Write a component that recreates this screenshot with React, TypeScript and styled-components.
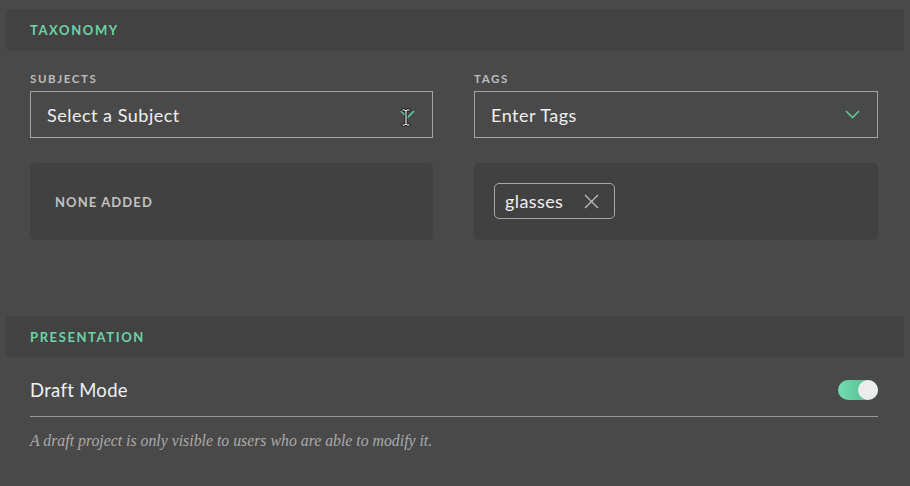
import React from "react";
import styled, { createGlobalStyle } from "styled-components";

const Global = createGlobalStyle`
  html, body { margin: 0; padding: 0; background: #494949; }
  body { font-family: "Lato", "Noto Sans", sans-serif; -webkit-font-smoothing: antialiased; }
`;

const Page = styled.div`
  width: 910px;
  height: 486px;
  background: #494949;
  padding-top: 9px;
  box-sizing: border-box;
  overflow: hidden;
`;

const SectionHeader = styled.div<{ $mt?: number }>`
  margin: ${(p) => p.$mt ?? 0}px 6px 0 6px;
  height: 42px;
  background: #424242;
  border-radius: 4px;
  display: flex;
  align-items: center;
  padding-left: 24px;
  color: #6dd3a6;
  font-size: 13px;
  font-weight: 700;
  letter-spacing: 1.6px;
`;

const Content = styled.div`
  padding: 0 32px 0 30px;
`;

const Grid = styled.div`
  display: grid;
  grid-template-columns: 403px 404px;
  column-gap: 41px;
  margin-top: 21px;
`;

const Column = styled.div`
  display: flex;
  flex-direction: column;
`;

const Label = styled.div`
  font-size: 11.5px;
  font-weight: 700;
  letter-spacing: 1.6px;
  color: #bdbdbd;
  height: 14px;
  line-height: 14px;
  margin-bottom: 5px;
`;

const SelectBox = styled.div`
  position: relative;
  height: 47px;
  box-sizing: border-box;
  border: 1px solid #a3a3a3;
  display: flex;
  align-items: center;
  justify-content: space-between;
  padding: 0 17px 0 16px;
  font-size: 18px;
  letter-spacing: 0.5px;
  color: #efefef;
`;

const Chevron = styled.svg`
  width: 15px;
  height: 9px;
`;

const Cursor = styled.svg`
  position: absolute;
  left: 370px;
  top: 16px;
  width: 10px;
  height: 19px;
`;

const ListBox = styled.div`
  margin-top: 25px;
  height: 77px;
  background: #414141;
  border-radius: 5px;
  box-sizing: border-box;
  display: flex;
  align-items: center;
  padding: 0 20px;
`;

const Empty = styled.div`
  font-size: 13px;
  font-weight: 700;
  letter-spacing: 1.1px;
  color: #c2c2c2;
  padding-left: 5px;
  margin-top: 1px;
`;

const TagList = styled.div`
  display: flex;
  align-self: flex-start;
  margin-top: 20px;
`;

const Chip = styled.div`
  height: 36px;
  box-sizing: border-box;
  border: 1px solid #a8a8a8;
  border-radius: 5px;
  display: flex;
  align-items: center;
  gap: 21px;
  padding: 0 15px 0 10px;
  font-size: 18px;
  letter-spacing: 0.4px;
  color: #efefef;
`;

const CloseIcon = styled.svg`
  width: 15px;
  height: 15px;
`;

const ToggleRow = styled.div`
  margin-top: 11px;
  height: 42px;
  display: flex;
  align-items: center;
  justify-content: space-between;
  border-bottom: 1px solid #9a9a9a;
  padding-bottom: 5px;
`;

const RowLabel = styled.div`
  font-size: 18.5px;
  letter-spacing: 0.3px;
  color: #f0f0f0;
`;

const Toggle = styled.div`
  position: relative;
  width: 40px;
  height: 20px;
  border-radius: 10px;
  background: linear-gradient(90deg, #74dcb2 0%, #5cc497 60%, #4caf85 100%);
`;

const Knob = styled.div`
  position: absolute;
  right: 0;
  top: 0;
  width: 20px;
  height: 20px;
  border-radius: 50%;
  background: #ececec;
`;

const Hint = styled.div`
  margin-top: 15px;
  font-family: "Liberation Serif", "DejaVu Serif", serif;
  font-style: italic;
  font-size: 15.8px;
  color: #ababab;
`;

export default function App() {
  return (
    <Page>
      <Global />
      <SectionHeader>TAXONOMY</SectionHeader>
      <Content>
        <Grid>
          <Column>
            <Label>SUBJECTS</Label>
            <SelectBox>
              <span>Select a Subject</span>
              <Chevron viewBox="0 0 15 9">
                <path d="M1 1 L7.5 7.5 L14 1" fill="none" stroke="#5fc79b" strokeWidth="1.6" />
              </Chevron>
              <Cursor viewBox="0 0 10 19">
                <path
                  d="M1 1 H4 L5 2 L6 1 H9 V3 H6 V16 H9 V18 H6 L5 17 L4 18 H1 V16 H4 V3 H1 Z"
                  fill="#ffffff"
                  stroke="#111"
                  strokeWidth="0.9"
                />
              </Cursor>
            </SelectBox>
            <ListBox>
              <Empty>NONE ADDED</Empty>
            </ListBox>
          </Column>
          <Column>
            <Label>TAGS</Label>
            <SelectBox>
              <span>Enter Tags</span>
              <Chevron viewBox="0 0 15 9">
                <path d="M1 1 L7.5 7.5 L14 1" fill="none" stroke="#5fc79b" strokeWidth="1.6" />
              </Chevron>
            </SelectBox>
            <ListBox>
              <TagList>
                <Chip>
                  <span>glasses</span>
                  <CloseIcon viewBox="0 0 15 15">
                    <path d="M1 1 L14 14 M14 1 L1 14" stroke="#bdbdbd" strokeWidth="1.3" />
                  </CloseIcon>
                </Chip>
              </TagList>
            </ListBox>
          </Column>
        </Grid>
      </Content>
      <SectionHeader $mt={76}>PRESENTATION</SectionHeader>
      <Content>
        <ToggleRow>
          <RowLabel>Draft Mode</RowLabel>
          <Toggle>
            <Knob />
          </Toggle>
        </ToggleRow>
        <Hint>A draft project is only visible to users who are able to modify it.</Hint>
      </Content>
    </Page>
  );
}
